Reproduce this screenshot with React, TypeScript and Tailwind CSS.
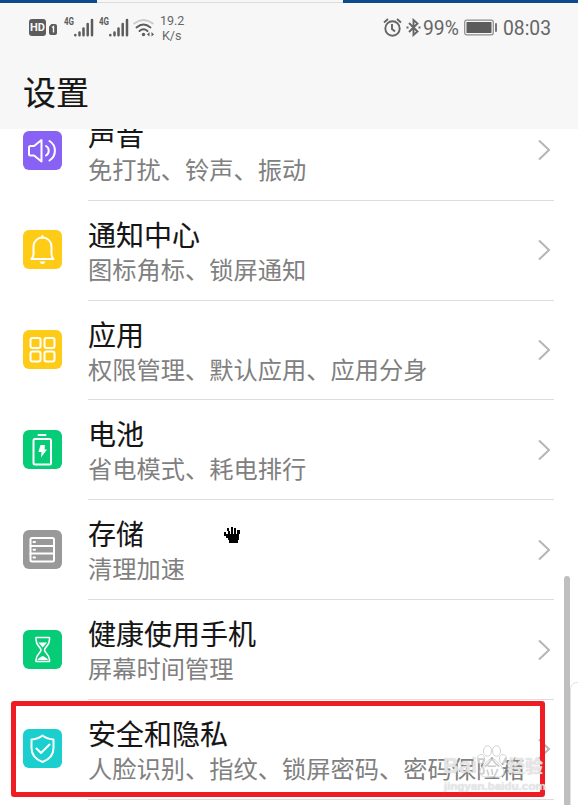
import type { ReactNode } from 'react';

interface SettingItem {
  title: string;
  subtitle: string;
  color: string;
  icon: ReactNode;
}

const items: SettingItem[] = [
  {
    title: '声音',
    subtitle: '免打扰、铃声、振动',
    color: 'bg-[#8861f5]',
    icon: (
      <>
        <path d="M6 16.5Q6 15 7.5 15H11L18.5 9V30.5L11 24.5H7.5Q6 24.5 6 23Z" />
        <path d="M23 15A5.5 5.5 0 0 1 23 24.5M26.5 10A11.5 11.5 0 0 1 26.5 29.5" />
      </>
    ),
  },
  {
    title: '通知中心',
    subtitle: '图标角标、锁屏通知',
    color: 'bg-[#fecb16]',
    icon: (
      <>
        <path d="M8.5 29H30.5Q28.5 27 28.5 24V16.5A9 9 0 0 0 10.5 16.5V24Q10.5 27 8.5 29Z" />
        <path d="M19.5 6V7.5" />
        <path d="M16.5 31.5H22.5Q21.5 34 19.5 34T16.5 31.5Z" fill="white" stroke="none" />
      </>
    ),
  },
  {
    title: '应用',
    subtitle: '权限管理、默认应用、应用分身',
    color: 'bg-[#fecb16]',
    icon: (
      <>
        <rect x="7.5" y="8" width="10" height="10" rx="2" />
        <rect x="21.5" y="8" width="10" height="10" rx="2" />
        <rect x="7.5" y="21.5" width="10" height="10" rx="2" />
        <rect x="21.5" y="21.5" width="10" height="10" rx="2" />
      </>
    ),
  },
  {
    title: '电池',
    subtitle: '省电模式、耗电排行',
    color: 'bg-[#06cc77]',
    icon: (
      <>
        <rect x="10.5" y="9" width="17.5" height="25.5" rx="1.5" />
        <path d="M15.5 5H22.5" />
        <path d="M17.5 15H22L21.5 19.5H24L18 27.5L18.5 22H15.5Z" fill="white" stroke="none" />
      </>
    ),
  },
  {
    title: '存储',
    subtitle: '清理加速',
    color: 'bg-[#999999]',
    icon: (
      <>
        <rect x="7.5" y="8" width="23.5" height="23.5" rx="1.5" />
        <path d="M7.5 16H31M7.5 23.5H31M10.5 12H12M10.5 19.7H12M10.5 27.5H12" />
      </>
    ),
  },
  {
    title: '健康使用手机',
    subtitle: '屏幕时间管理',
    color: 'bg-[#06cc77]',
    icon: (
      <>
        <path strokeWidth="1.6" d="M13 7.5H26.5V9.5C26.5 16 21.5 17 21.5 20C21.5 23 26.5 24 26.5 30V31.5H13V30C13 24 18 23 18 20C18 17 13 16 13 9.5Z" />
        <path d="M15.5 12.5H24L19.7 17.5ZM14.5 30C15 28 18 27 19.7 26C21.5 27 24.5 28 25 30Z" fill="white" stroke="none" />
      </>
    ),
  },
  {
    title: '安全和隐私',
    subtitle: '人脸识别、指纹、锁屏密码、密码保险箱',
    color: 'bg-[#1ccfcf]',
    icon: (
      <>
        <path d="M19.5 6.5Q24 10 30.5 10.5V19C30.5 26.5 26 30.5 19.5 33C13 30.5 8.5 26.5 8.5 19V10.5Q15 10 19.5 6.5Z" />
        <path d="M13.5 19.5L18 24L26.5 15.5" />
      </>
    ),
  },
];

const Signal = () => (
  <div className="flex w-[30px] items-start text-[#5c5c5c]">
    <span className="w-[10px] origin-left scale-x-80 text-[10px] leading-[10px] font-bold">4G</span>
    <svg className="h-[20px] w-[20px] shrink-0" viewBox="0 0 20 20" stroke="currentColor" strokeWidth="2.5" strokeLinecap="round">
      <path d="M1.3 18V18.2M5.5 15.5V18.2M9.5 11.5V18.2M13.7 7V18.2M18 3V18.2" />
    </svg>
  </div>
);

const StatusBar = () => (
  <div className="flex h-[50px] items-start pt-[13px] pl-[29px] font-[Roboto] text-[#666666]">
    <div className="mt-[3px] flex h-[17px] w-[17px] items-center justify-center rounded-[3px] bg-[#5c5c5c] text-[11px] leading-none font-bold text-[#f7f7f7]">
      HD
    </div>
    <svg className="mt-[8px] ml-[3px] h-[11px] w-[8px]" viewBox="0 0 8 11">
      <path d="M2.5 0H6Q8 0 8 2V9Q8 11 6 11H2Q0 11 0 9V2.5Z" fill="#5c5c5c" />
      <path d="M3 3.5L4.5 2.5V8.5" fill="none" stroke="#f7f7f7" strokeWidth="1.4" />
    </svg>
    <div className="mt-px ml-[7px] flex gap-[5px]">
      <Signal />
      <Signal />
    </div>
    <svg className="mt-[2px] ml-[4px] h-[20px] w-[22px]" viewBox="0 0 22 20" fill="none" stroke="#5c5c5c" strokeWidth="1.9" strokeLinecap="round">
      <path d="M1.2 5.5Q10.5 -1.5 19.8 5.5" stroke="#cccccc" />
      <path d="M3.5 9.5Q10.5 3.5 17.5 9.5M6.5 13Q10.5 9.5 14.5 13" />
      <circle cx="10.5" cy="16.5" r="1.7" fill="#5c5c5c" stroke="none" />
      <path d="M16.5 14V18.5L14 16.5ZM18.5 14V18.5L21 16.5Z" fill="#5c5c5c" stroke="none" />
    </svg>
    <div className="-mt-[3px] ml-[5px] w-[28px] text-[12.5px] leading-[15px]">
      <div>19.2</div>
      <div className="pl-[2px]">K/s</div>
    </div>
    <svg className="mt-[2px] ml-[195px] h-[19px] w-[19px]" viewBox="0 0 19 19" fill="none" stroke="currentColor" strokeWidth="1.9">
      <circle cx="9.5" cy="10.5" r="7.2" />
      <path d="M9 6V11L12 13.5M1 4.5L5 1M18 4.5L14 1" />
    </svg>
    <svg className="mt-[2px] ml-[4px] h-[19px] w-[15px]" viewBox="0 0 15 19" fill="none" stroke="currentColor" strokeWidth="1.9">
      <path d="M3 5L11.5 13.5L7.5 17V2L11.5 5.5L3 14" />
      <path d="M.5 9.5H2.5M12.5 9.5H14.5" />
    </svg>
    <div className="mt-px ml-[2px] w-[36px] text-[19.3px] leading-[24px]">99%</div>
    <svg className="mt-[3px] ml-[5px] h-[17px] w-[34px]" viewBox="0 0 34 17">
      <rect x=".7" y="1.2" width="28.6" height="14.6" rx="2" fill="none" stroke="#8c8c8c" strokeWidth="1.2" />
      <rect x="2.5" y="3" width="25" height="11" rx=".5" fill="#5c5c5c" />
      <rect x="31" y="4" width="2" height="9" rx="1" fill="#777777" />
    </svg>
    <div className="mt-px ml-[5px] text-[19.3px] leading-[24px]">08:03</div>
  </div>
);

const SettingRow = ({ title, subtitle, color, icon }: SettingItem) => (
  <div className="flex h-[99.84px] shrink-0 pl-[23px]">
    <div className={`mt-[29.5px] h-[39px] w-[39px] shrink-0 rounded-[6px] ${color}`}>
      <svg className="h-[39px] w-[39px]" viewBox="0 0 39 39" fill="none" stroke="white" strokeWidth="2" strokeLinecap="round" strokeLinejoin="round">
        {icon}
      </svg>
    </div>
    <div className="ml-[26px] flex w-[466px] shrink-0 items-center border-b border-[#dddddd] pr-[3px]">
      <div className="min-w-0 flex-1 whitespace-nowrap">
        <div className="pt-px text-[28px] leading-[36px] text-[#151515] [-webkit-text-stroke:0.12px_#151515]">{title}</div>
        <div className="text-[24.25px] leading-[34px] text-[#808080]">{subtitle}</div>
      </div>
      <svg className="h-[22px] w-[14px] shrink-0" viewBox="0 0 14 22" fill="none" stroke="#b5b5b5" strokeWidth="2">
        <path d="M2 1.5L12 11L2 20.5" />
      </svg>
    </div>
  </div>
);

const Watermark = () => (
  <div className="absolute top-[742px] left-[443px] w-[104px] font-['Liberation_Sans','Noto_Sans_CJK_SC',sans-serif] font-bold whitespace-nowrap text-white/60 [text-shadow:0_0_1px_#bbbbbb]">
    <div className="flex h-[37px] items-end">
      <span className="w-[34px] text-[22px] leading-[26px]">Bai</span>
      <svg className="h-[34px] w-[30px] shrink-0" viewBox="0 0 30 34" fill="white" fillOpacity=".6" stroke="#cfcfcf" strokeWidth=".9">
        <ellipse cx="4" cy="14" rx="3.5" ry="4.5" />
        <ellipse cx="10.5" cy="6" rx="4" ry="5.3" />
        <ellipse cx="19.5" cy="6" rx="4" ry="5.3" />
        <ellipse cx="26" cy="14" rx="3.5" ry="4.5" />
        <path d="M15 14C20 14 21 19 25 22C30 28 25 33 20 32Q15 31 10 32C5 33 0 28 5 22C9 19 10 14 15 14Z" />
      </svg>
      <span className="text-[18px] leading-[24px]">经验</span>
    </div>
    <div className="pl-px text-[11.6px] leading-[13px]">jingyan.baidu.com</div>
  </div>
);

const App = () => {
  return (
    <main className="relative flex h-[805px] w-[578px] flex-col overflow-hidden bg-white font-['Noto_Sans_CJK_SC',sans-serif]">
      <header className="h-[129px] shrink-0 bg-[#f7f7f7]">
        <div className="flex h-[3px]">
          <div className="w-[97px] bg-[#0b4a8b]" />
          <div className="flex-1 border-b border-[#dddddd]" />
          <div className="w-[235px] bg-[#0b4a8b]" />
        </div>
        <StatusBar />
        <h1 className="pt-[15px] pl-[23px] text-[33px] leading-[46px] text-[#151515] [-webkit-text-stroke:0.2px_#151515]">设置</h1>
      </header>

      <section className="flex flex-1 flex-col overflow-hidden">
        <div className="-mt-[28px]">
          {items.map((item) => (
            <SettingRow key={item.title} {...item} />
          ))}
        </div>
      </section>

      {/* scrollbar and the edge of the side panel */}
      <div className="absolute top-[576px] left-[564px] h-[240px] w-[6px] rounded-full bg-[#bfbfbf]" />
      <div className="absolute top-[682px] left-[570px] h-[130px] w-[20px] rounded-tl-[7px] border border-[#e2e2e2]" />

      <div className="absolute top-[701px] left-[11px] h-[96px] w-[534px] rounded-[3px] border-[5px] border-[#ef1c24]" />
      <Watermark />

      {/* hand cursor */}
      <svg className="absolute top-[526px] left-[224px] h-[18px] w-[17px]" viewBox="0 0 17 18" shapeRendering="crispEdges">
        <path d="M3 2H5V5H6V8H7V1H9V8H10V2H12V8H13V4H16V8H15V14H14V17H5V14H4V12H2V10H0V6H2V8H4V5H3Z" fill="black" />
      </svg>
    </main>
  );
};

export default App;
